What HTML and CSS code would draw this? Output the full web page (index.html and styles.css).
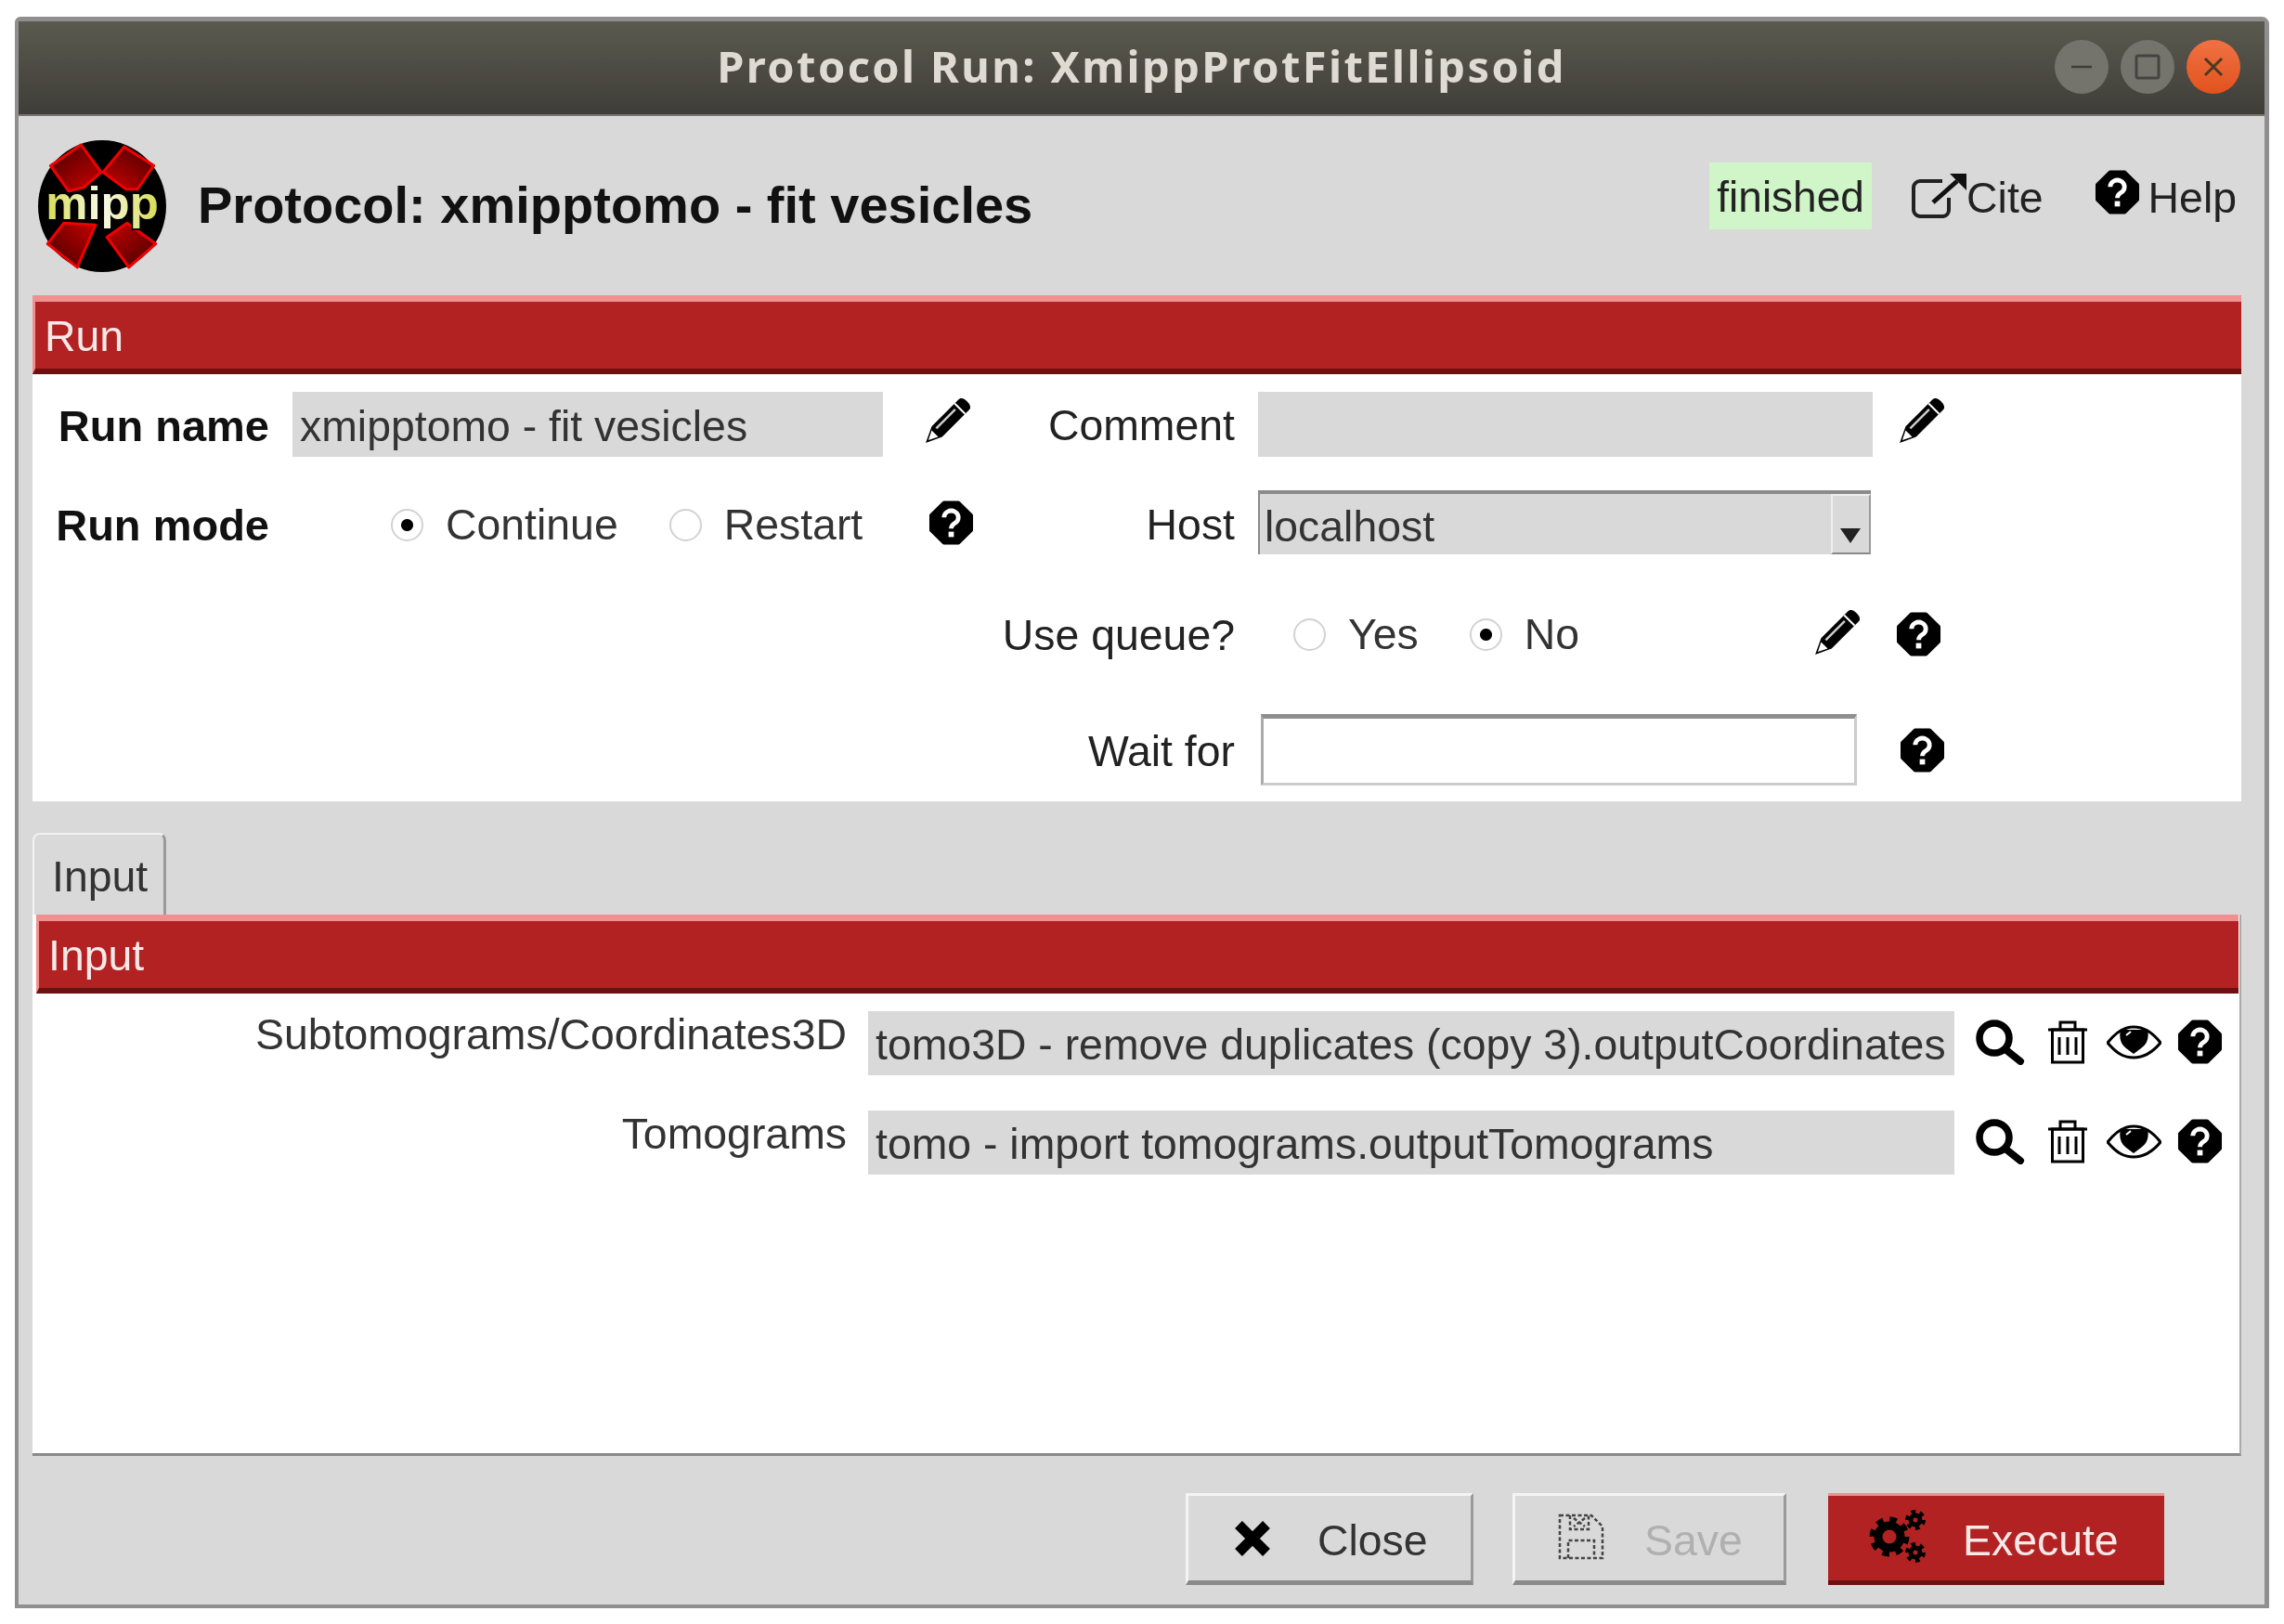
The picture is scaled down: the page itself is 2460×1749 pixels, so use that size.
FILE: index.html
```html
<!DOCTYPE html>
<html lang="en">
<head>
  <meta charset="UTF-8" />
  <title>Protocol Run: XmippProtFitEllipsoid</title>
  <link rel="stylesheet" href="styles.css">
</head>
<body>
  <svg class="icon-defs" aria-hidden="true">
    <symbol id="i-help" viewBox="0 0 50 50">
      <path d="M17 3H33L47 17V33L33 47H17L3 33V17Z" fill="#000" stroke="#000" stroke-width="5" stroke-linejoin="round"/>
      <path d="M17 19a8 7.500 0 1 1 12 6.500c-3 1.800-4 3-4 6" fill="none" stroke="#fff" stroke-width="5"/>
      <rect x="22" y="35" width="6" height="6" fill="#fff"/>
    </symbol>
    <symbol id="i-pencil" viewBox="0 0 52 52">
      <g transform="rotate(45 26 26)">
        <path d="M18 -1Q18 -6 26 -6T34 -1V40L26 57L18 40Z" fill="#000"/>
        <path d="M18 5H34" stroke="#fff" stroke-width="2"/>
        <path d="M23 9V38" stroke="#ccc" stroke-width="2.500"/>
        <path d="M21 43L26 53L31 43Z" fill="#fff"/>
      </g>
    </symbol>
    <symbol id="i-search" viewBox="0 0 55 50">
      <circle cx="22" cy="21" r="16" fill="none" stroke="#000" stroke-width="7.500"/>
      <path d="M35 34L50 46" stroke="#000" stroke-width="8" stroke-linecap="round"/>
    </symbol>
    <symbol id="i-trash" viewBox="0 0 42 47">
      <path d="M0 10H42M13 9V2H29V9" fill="none" stroke="#000" stroke-width="3"/>
      <rect x="4.500" y="10" width="33" height="35" fill="none" stroke="#000" stroke-width="3"/>
      <path d="M12 18V37M21 18V37M30 18V37" stroke="#000" stroke-width="3"/>
    </symbol>
    <symbol id="i-eye" viewBox="0 0 59 37">
      <path d="M1 19C11 6 20 2 29 2S48 6 58 19C48 31 39 35 29 35S11 31 1 19Z" fill="#fff" stroke="#000" stroke-width="3"/>
      <path d="M15 5H44Q47 18 37 25L29 31L21 25Q12 18 15 5Z" fill="#000"/>
      <path d="M21 11L26 7" stroke="#fff" stroke-width="2"/>
    </symbol>
    <symbol id="i-cite" viewBox="0 0 60 50">
      <path d="M34 9H10a7 7 0 0 0-7 7V40a7 7 0 0 0 7 7H35a7 7 0 0 0 6-7V27" fill="none" stroke="#222" stroke-width="4"/>
      <path d="M24 32L50 9" stroke="#111" stroke-width="5"/>
      <path d="M42 1H60V19Z" fill="#111"/>
    </symbol>
    <symbol id="i-close" viewBox="0 0 44 42">
      <path d="M7 6L37 36M37 6L7 36" stroke="#000" stroke-width="11"/>
    </symbol>
    <symbol id="i-save" viewBox="0 0 50 50">
      <g fill="none" stroke="#444" stroke-width="2.500" stroke-dasharray="4 2.500">
        <path d="M2 2H36L48 14V48H2Z"/>
        <path d="M13 2V17H33V2"/>
        <path d="M11 48V29H39V48"/>
        <path d="M17 5L29 14M29 5L17 14"/>
      </g>
    </symbol>
    <symbol id="i-gears" viewBox="0 0 63 57">
      <g fill="none" stroke="#000">
        <circle cx="22" cy="29" r="12" stroke-width="9"/>
        <circle cx="22" cy="29" r="18.500" stroke-width="6" stroke-dasharray="7.500 7"/>
        <circle cx="50" cy="11" r="5" stroke-width="5"/>
        <circle cx="50" cy="11" r="9" stroke-width="4" stroke-dasharray="4.700 4.700"/>
        <circle cx="50" cy="46" r="5" stroke-width="5"/>
        <circle cx="50" cy="46" r="9" stroke-width="4" stroke-dasharray="4.700 4.700"/>
      </g>
    </symbol>
  </svg>

  <div class="window">
    <div class="titlebar">
      <span></span>
      <span class="title">Protocol Run: XmippProtFitEllipsoid</span>
      <div class="controls">
        <span class="ctl"><svg width="24" height="24" viewBox="0 0 24 24"><path d="M1 12H23" stroke="#3f3e39" stroke-width="2.500"/></svg></span>
        <span class="ctl"><svg width="28" height="28" viewBox="0 0 28 28"><rect x="2" y="2" width="24" height="24" rx="2" fill="none" stroke="#454440" stroke-width="3"/></svg></span>
        <span class="ctl ctl-close"><svg width="24" height="24" viewBox="0 0 24 24"><path d="M3 3L21 21M21 3L3 21" stroke="#4a3a20" stroke-width="3"/></svg></span>
      </div>
    </div>

    <header class="head">
      <svg class="logo" width="139" height="142" viewBox="0 0 135 140" preserveAspectRatio="none">
        <defs>
          <radialGradient id="red-fill" cx="67" cy="70" r="70" gradientUnits="userSpaceOnUse">
            <stop offset="0.2" stop-color="#d00000"/>
            <stop offset="1" stop-color="#600000"/>
          </radialGradient>
          <linearGradient id="mipp-fill" x1="0" x2="1" y1="0" y2="0">
            <stop offset="0" stop-color="#d8dc50"/>
            <stop offset="0.5" stop-color="#f8f8e8"/>
            <stop offset="1" stop-color="#d8dc50"/>
          </linearGradient>
        </defs>
        <ellipse cx="67" cy="70" rx="67" ry="70" fill="#000"/>
        <g fill="url(#red-fill)" stroke="#f00000" stroke-width="3" stroke-linejoin="round">
          <path d="M13 27L45 5L66 34L48 50L32 54Z"/>
          <path d="M68 34L90 7L121 27L104 52L92 52Z"/>
          <path d="M27 88L60 90L41 135L10 110Z"/>
          <path d="M72 103L93 88L123 110L95 135Z"/>
        </g>
        <text class="logo-text" x="67" y="84" text-anchor="middle" textLength="118" lengthAdjust="spacingAndGlyphs" fill="url(#mipp-fill)">mipp</text>
      </svg>
      <h1>Protocol: xmipptomo - fit vesicles</h1>
      <div class="head-links">
        <span class="status">finished</span>
        <span class="link link-cite"><svg class="ic-cite"><use href="#i-cite"/></svg>Cite</span>
        <span class="link"><svg class="ic-help"><use href="#i-help"/></svg>Help</span>
      </div>
    </header>

    <section class="panel run-panel">
      <div class="bar">Run</div>
      <div class="run-form">
        <label class="lbl lbl-a"><b>Run name</b></label>
        <div class="entry entry-ro">xmipptomo - fit vesicles</div>
        <svg class="ic-pencil first"><use href="#i-pencil"/></svg>
        <label class="lbl lbl-d">Comment</label>
        <div class="entry entry-ro comment"></div>
        <svg class="ic-pencil"><use href="#i-pencil"/></svg>

        <label class="lbl lbl-a mode"><b>Run mode</b></label>
        <div class="radios radios-mode">
          <span class="radio on"></span><span class="opt">Continue</span>
          <span class="radio"></span><span class="opt">Restart</span>
        </div>
        <svg class="ic-help mode-help"><use href="#i-help"/></svg>
        <label class="lbl lbl-d mode">Host</label>
        <div class="combo">
          <span class="combo-val">localhost</span>
          <span class="combo-btn"><i></i></span>
        </div>
        <span></span>

        <label class="lbl lbl-d col-d">Use queue?</label>
        <div class="radios radios-queue">
          <span class="radio"></span><span class="opt">Yes</span>
          <span class="radio on"></span><span class="opt">No</span>
          <svg class="ic-pencil push"><use href="#i-pencil"/></svg>
        </div>
        <svg class="ic-help"><use href="#i-help"/></svg>

        <label class="lbl lbl-d col-d">Wait for</label>
        <div class="entry-white"></div>
        <svg class="ic-help wait-help"><use href="#i-help"/></svg>
      </div>
    </section>

    <div class="tabs"><span class="tab">Input</span></div>

    <section class="panel input-panel">
      <div class="bar bar-input">Input</div>
      <div class="params">
        <label class="param-lbl">Subtomograms/Coordinates3D</label>
        <div class="entry entry-ro param-entry">tomo3D - remove duplicates (copy 3).outputCoordinates</div>
        <div class="param-icons">
          <svg class="ic-search"><use href="#i-search"/></svg>
          <svg class="ic-trash"><use href="#i-trash"/></svg>
          <svg class="ic-eye"><use href="#i-eye"/></svg>
          <svg class="ic-help"><use href="#i-help"/></svg>
        </div>

        <label class="param-lbl">Tomograms</label>
        <div class="entry entry-ro param-entry">tomo - import tomograms.outputTomograms</div>
        <div class="param-icons">
          <svg class="ic-search"><use href="#i-search"/></svg>
          <svg class="ic-trash"><use href="#i-trash"/></svg>
          <svg class="ic-eye"><use href="#i-eye"/></svg>
          <svg class="ic-help"><use href="#i-help"/></svg>
        </div>
      </div>
    </section>

    <footer class="actions">
      <button type="button" class="btn btn-close"><svg class="ic-close"><use href="#i-close"/></svg><span class="btn-text">Close</span></button>
      <button type="button" class="btn btn-save"><svg class="ic-save"><use href="#i-save"/></svg><span class="btn-text">Save</span></button>
      <button type="button" class="btn btn-exec"><svg class="ic-gears"><use href="#i-gears"/></svg><span class="btn-text">Execute</span></button>
    </footer>
  </div>
</body>
</html>
```

FILE: styles.css
```css
:root {
  --bg: #d9d9d9;
  --red: #b22222;
  --text: #222;
}
html, body { margin: 0; padding: 0; background: #fff; }
body {
  width: 2460px;
  height: 1749px;
  overflow: hidden;
  color: var(--text);
  font-family: "Liberation Sans", Arial, sans-serif;
  font-size: 46.4px;
}
.icon-defs { display: none; }
svg { display: block; flex: none; }

.window {
  box-sizing: border-box;
  width: 2428px;
  height: 1714px;
  margin: 18px 0 0 16px;
  background: var(--bg);
  border: 4px solid #8f8f8f;
  border-top-width: 5px;
  border-right-width: 5px;
  border-radius: 6px 8px 0 0;
  filter: blur(0.7px);
}

/* window manager title */
.titlebar {
  display: grid;
  grid-template-columns: 1fr auto 1fr;
  align-items: center;
  height: 102px;
  padding: 0 26px;
  background: linear-gradient(#5b5a4f, #3f3d38);
  border-bottom: 2px solid #77756f;
  box-sizing: border-box;
}
.title {
  color: #dfdbd2;
  font-family: "Noto Sans", sans-serif;
  font-size: 47px;
  font-weight: 700;
  letter-spacing: 2.4px;
  margin-top: -5px;
}
.controls { display: flex; justify-content: flex-end; gap: 13px; margin-top: -3px; }
.ctl {
  display: flex;
  align-items: center;
  justify-content: center;
  width: 58px;
  height: 58px;
  border-radius: 50%;
  background: #74736c;
}
.ctl-close { background: linear-gradient(#ef7244, #e2521d); }

/* header */
.head {
  display: flex;
  align-items: center;
  height: 193px;
  padding: 0 30px 0 21px;
}
.logo { margin-right: 33px; }
.logo-text { font: bold 50px "Liberation Sans", sans-serif; paint-order: stroke; stroke: #000; stroke-width: 4px; }
h1 { margin: -3px 0 0; font-size: 56px; font-weight: bold; color: #111; }
.head-links {
  display: flex;
  align-items: center;
  margin-left: auto;
  padding-bottom: 21px;
}
.status {
  box-sizing: border-box;
  width: 175px;
  height: 72px;
  line-height: 75px;
  text-align: center;
  font-size: 46px;
  background: #d0f5c8;
}
.link { display: flex; align-items: center; padding-top: 3px; }
.link-cite { margin: 0 55px 0 42px; }
.link-cite .ic-cite { margin-right: 0; margin-top: -3px; }
.link .ic-help { margin-right: 9px; margin-top: -12px; }
.ic-cite { width: 60px; height: 50px; }

/* red section bars */
.panel { background: #fff; margin: 0 25px 0 15px; }
.bar {
  box-sizing: border-box;
  height: 85px;
  padding-left: 10px;
  line-height: 74px;
  color: #f8e8e8;
  background: var(--red);
  border-top: 7px solid #f09090;
  border-bottom: 6px solid #6d1010;
  border-left: 3px solid #f09090;
}
.bar-input { margin: 0 1px 0 4px; }

/* run form */
.run-form {
  display: grid;
  grid-template-columns: 255px 636px 109px 295px 687px 1fr;
  grid-template-rows: 70px 69px 100px 77px;
  row-gap: 36px;
  align-items: center;
  padding: 19px 0 17px 25px;
  box-sizing: border-box;
  height: 460px;
}
.lbl { text-align: right; white-space: nowrap; margin-top: 2px; }
.lbl-a { padding-right: 25px; }
.lbl-d { padding-right: 25px; }
.col-d { grid-column: 4; }
.mode { margin-top: 5px; }
b { color: #111; font-size: 47px; }
.entry {
  box-sizing: border-box;
  height: 70px;
  line-height: 74px;
  padding-left: 8px;
  background: var(--bg);
  color: #333;
  white-space: nowrap;
}
.comment { width: 662px; }
.first { margin-left: 42px; }
.ic-pencil { width: 52px; height: 52px; margin-bottom: 4px; }
.ic-help { width: 49px; height: 48px; }
.mode-help { margin-left: 49px; }
.wait-help { margin-left: 4px; }

.radios { display: flex; align-items: center; color: #333; height: 100%; }
.radios-mode { padding: 5px 0 0 106px; box-sizing: border-box; }
.radios-queue { padding: 0 39px 0 38px; box-sizing: border-box; }
.radio {
  box-sizing: border-box;
  width: 35px;
  height: 35px;
  margin-right: 24px;
  border: 2px solid #d2d2d2;
  border-radius: 50%;
  background: #fff;
}
.radio.on { background: radial-gradient(circle, #000 0 6px, #fff 7px); }
.opt + .radio { margin-left: 55px; }
.push { margin-left: auto; margin-bottom: 0; }

.combo {
  box-sizing: border-box;
  display: flex;
  width: 660px;
  height: 69px;
  background: var(--bg);
  border-top: 4px solid #8a8a8a;
  border-left: 2px solid #8a8a8a;
}
.combo-val { flex: 1; padding-left: 5px; line-height: 70px; color: #333; }
.combo-btn {
  box-sizing: border-box;
  position: relative;
  width: 43px;
  border: 2px solid #eee;
  border-bottom-color: #8a8a8a;
  border-right-color: #999;
}
.combo-btn i {
  position: absolute;
  left: 8px;
  top: 35px;
  border: 11px solid transparent;
  border-top: 16px solid #222;
  border-bottom: 0;
}
.entry-white {
  box-sizing: border-box;
  width: 642px;
  height: 77px;
  margin-left: 3px;
  background: #fff;
  border: 3px solid #ccc;
  border-top: 5px solid #8f8f8f;
  border-left-color: #aaa;
}

/* tab strip */
.tabs { display: flex; margin: 34px 0 0 15px; }
.tab {
  box-sizing: border-box;
  width: 144px;
  height: 88px;
  padding: 15px 0 0 19px;
  line-height: 60px;
  color: #333;
  background: var(--bg);
  border: 2px solid #f2f2f2;
  border-right: 3px solid #9a9a9a;
  border-bottom: 0;
  border-radius: 8px 8px 0 0;
}

/* input params */
.input-panel {
  height: 583px;
  box-sizing: border-box;
  border-bottom: 3px solid #8a8a8a;
  border-right: 2px solid #aaa;
}
.params {
  display: grid;
  grid-template-columns: 877px 1170px auto;
  column-gap: 23px;
  row-gap: 38px;
  padding-top: 19px;
  align-items: start;
}
.param-lbl { text-align: right; line-height: 50px; margin-top: 0; white-space: nowrap; color: #333; }
.param-entry { height: 69px; line-height: 72px; }
.param-icons { display: flex; align-items: center; margin: 8px 0 0 -2px; height: 50px; }
.ic-search { width: 55px; height: 50px; }
.ic-trash { width: 42px; height: 47px; margin-left: 25px; }
.ic-eye { width: 59px; height: 37px; margin-left: 21px; }
.param-icons .ic-help { width: 51px; height: 48px; margin-left: 16px; }

/* bottom buttons */
.actions {
  display: flex;
  justify-content: flex-end;
  padding: 40px 108px 0 0;
}
.btn {
  box-sizing: border-box;
  display: flex;
  align-items: center;
  height: 99px;
  padding: 0;
  font: inherit;
  color: #333;
  background: var(--bg);
  border: 3px solid #f4f4f4;
  border-right-color: #9a9a9a;
  border-bottom: 5px solid #8a8a8a;
}
.btn-text { padding-top: 5px; }
.btn-close { width: 310px; padding-left: 47px; }
.ic-close { width: 44px; height: 42px; margin-right: 48px; }
.btn-save { width: 295px; margin-left: 42px; padding-left: 46px; color: #b0b0b0; }
.ic-save { width: 50px; height: 50px; margin-right: 43px; margin-top: -4px; }
.btn-exec {
  width: 362px;
  margin-left: 45px;
  padding-left: 44px;
  color: #f8e8e8;
  background: var(--red);
  border: 0;
  border-top: 3px solid #f09090;
  border-bottom: 5px solid #6d1010;
}
.ic-gears { width: 63px; height: 57px; margin-right: 38px; margin-top: -4px; }
```
